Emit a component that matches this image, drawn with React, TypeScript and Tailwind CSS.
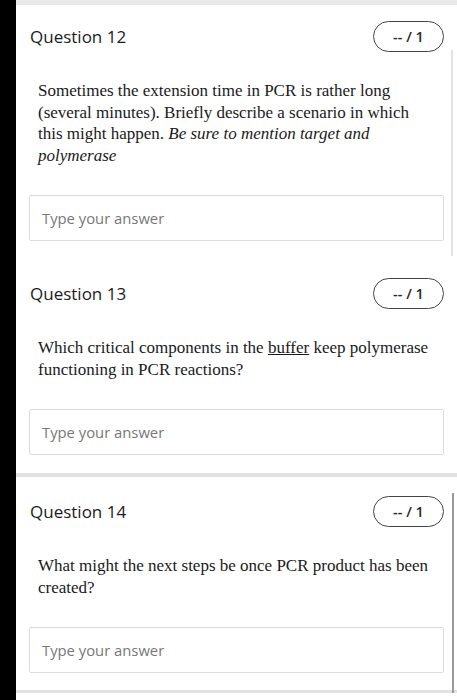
import React from "react";

const serif = { fontFamily: '"Liberation Serif", "Times New Roman", serif' };
const sans = { fontFamily: '"Open Sans", "Noto Sans", sans-serif' };

function Header({ n }: { n: number }) {
  return (
    <div className="flex h-[31px] items-center justify-between">
      <div className="pl-[1px] text-[17px] font-medium text-[#1b1b1b]" style={sans}>
        Question {n}
      </div>
      <div
        className="flex h-[31px] w-[71px] items-center justify-center rounded-full border border-[#444] text-[14.5px] font-semibold text-[#2a2a2a]"
        style={sans}
      >
        -- / 1
      </div>
    </div>
  );
}

function Answer() {
  return (
    <div
      className="mt-[29px] flex h-[46px] items-center rounded-[2px] border border-[#dcdcdc] pl-[12px] text-[14.8px] text-[#777]"
      style={sans}
    >
      Type your answer
    </div>
  );
}

function Body({ children }: { children: React.ReactNode }) {
  return (
    <div className="mt-[28px] pl-[9px] text-[17px] leading-[21.5px] text-[#1a1a1a]" style={serif}>
      {children}
    </div>
  );
}

export default function App() {
  return (
    <div className="flex min-h-[700px] bg-white">
      <div className="w-4 shrink-0 bg-black" />
      <div className="relative flex-1">
        <div className="h-[5px] bg-[#e8e8e8]" />
        <div className="px-[13px] pt-[16px] pb-[18px]">
          <Header n={12} />
          <Body>
            Sometimes the extension time in PCR is rather long
            <br />
            (several minutes). Briefly describe a scenario in which
            <br />
            this might happen. <i>Be sure to mention target and</i>
            <br />
            <i>polymerase</i>
          </Body>
          <Answer />
          <div className="mt-[37px]">
            <Header n={13} />
            <Body>
              Which critical components in the <u>buffer</u> keep polymerase
              <br />
              functioning in PCR reactions?
            </Body>
            <Answer />
          </div>
        </div>
        <div className="h-[4px] bg-[#e2e2e2]" />
        <div className="px-[13px] pt-[19px] pb-[17px]">
          <Header n={14} />
          <Body>
            What might the next steps be once PCR product has been
            <br />
            created?
          </Body>
          <Answer />
        </div>
        <div className="h-[3px] bg-[#e2e2e2]" />
        <div className="absolute left-[435px] top-[50px] h-[206px] w-[2px] bg-[#e2e2e2]" />
        <div className="absolute left-[436px] top-[493px] h-[200px] w-[2px] bg-[#9a9a9a]" />
      </div>
    </div>
  );
}
